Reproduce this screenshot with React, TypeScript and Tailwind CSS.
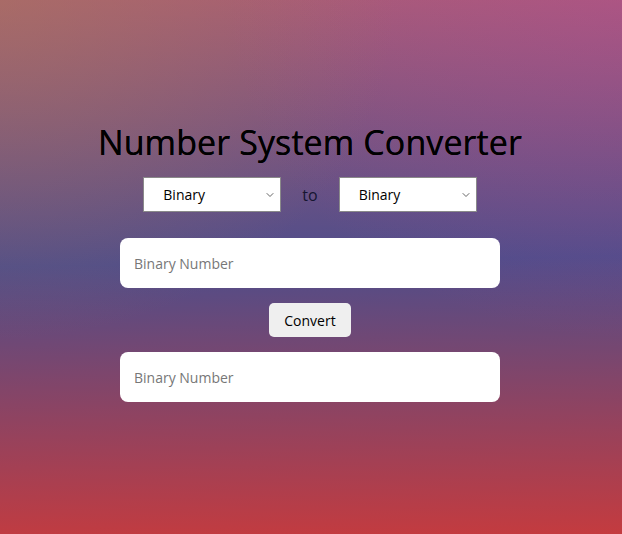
import React from 'react'
import { ChevronDown } from 'lucide-react'

const options = ['Binary', 'Decimal', 'Octal', 'Hexadecimal']

const Select = ({ value, onChange }: { value: string; onChange: (v: string) => void }) => (
  <div className="relative">
    <select
      value={value}
      onChange={(e) => onChange(e.target.value)}
      className="appearance-none w-[138px] h-[35px] pl-[19px] text-[14px] text-black bg-white border border-[#8a8a8a] outline-none"
    >
      {options.map((o) => (
        <option key={o}>{o}</option>
      ))}
    </select>
    <ChevronDown
      size={12}
      strokeWidth={2}
      className="absolute right-[5px] top-[12px] text-[#666] pointer-events-none"
    />
  </div>
)

const App = () => {
  const [from, setFrom] = React.useState('Binary')
  const [to, setTo] = React.useState('Binary')
  const [value, setValue] = React.useState('')

  return (
    <div
      className="h-screen w-full flex flex-col items-center pt-[121px] pr-[2px] bg-[radial-gradient(ellipse_at_top_left,rgba(170,125,85,0.45),transparent_45%),radial-gradient(ellipse_at_top_right,rgba(190,70,160,0.3),transparent_45%),linear-gradient(179deg,#a85c76_0%,#4f4d8a_49%,#c43b3f_100%)]"
      style={{ fontFamily: '"Open Sans", sans-serif' }}
    >
      <h1 className="text-[34px] leading-[42px] font-medium text-black tracking-[0.1px] [text-shadow:0_0_0.4px_#000]">
        Number System Converter
      </h1>

      <div className="flex items-center mt-[14px]">
        <Select value={from} onChange={setFrom} />
        <span className="mx-[21px] text-[16px] text-[#151530]">to</span>
        <Select value={to} onChange={setTo} />
      </div>

      <input
        value={value}
        onChange={(e) => setValue(e.target.value)}
        placeholder={`${from} Number`}
        className="mt-[26px] w-[380px] h-[50px] px-[14px] rounded-lg bg-white text-[14px] placeholder:text-[#777] outline-none"
      />

      <button className="mt-[15px] h-[34px] px-[15px] rounded-[5px] bg-[#efefef] text-[14px] text-black">
        Convert
      </button>

      <input
        readOnly
        placeholder={`${to} Number`}
        className="mt-[15px] w-[380px] h-[50px] px-[14px] rounded-lg bg-white text-[14px] placeholder:text-[#777] outline-none"
      />
    </div>
  )
}

export default App
